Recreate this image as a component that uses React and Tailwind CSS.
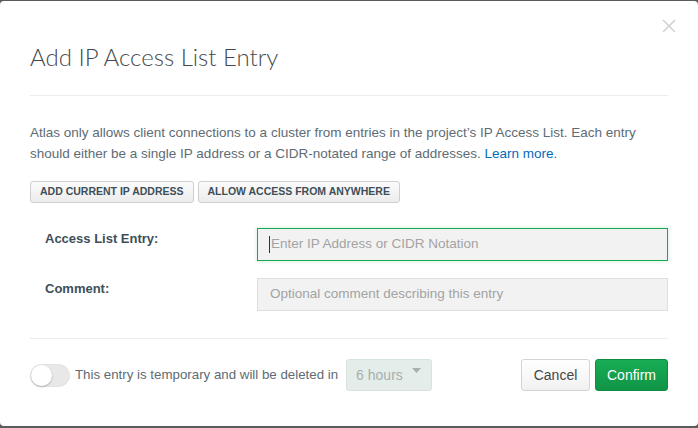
import React from 'react';

const sans = { fontFamily: '"Liberation Sans", Arial, sans-serif' };

const CloseIcon = () => (
  <svg width="14" height="14" viewBox="0 0 14 14" className="text-[#cfd4d3]">
    <path d="M1 1L13 13M13 1L1 13" stroke="currentColor" strokeWidth="1.6" fill="none" />
  </svg>
);

const App = () => {
  return (
    <div className="h-screen w-full bg-[#5b5b5b] pt-px" style={sans}>
      <div className="relative h-[425px] rounded-[4px] bg-white">
        <button className="absolute right-[22px] top-[18px]">
          <CloseIcon />
        </button>

        {/* Header */}
        <div className="px-[30px] pt-[40px]">
          <h2
            className="pb-[22px] text-[24px] font-light leading-[32px] text-[#464a4c]"
            style={{ fontFamily: 'Lato, "Liberation Sans", sans-serif' }}
          >
            Add IP Access List Entry
          </h2>
          <div className="h-px bg-[#e7eeec]" />
        </div>

        {/* Body */}
        <div className="px-[30px] pt-[26px]">
          <p className="text-[13.5px] leading-[21px] text-[#5d6c74]">
            Atlas only allows client connections to a cluster from entries in the project’s IP Access List. Each entry
            <br />
            should either be a single IP address or a CIDR-notated range of addresses.{' '}
            <a className="text-[#006cbc]">Learn more</a>.
          </p>

          <div className="mt-[17px] flex gap-1">
            <button className="h-[22px] rounded-[3px] border border-[#cfcfcf] bg-gradient-to-b from-[#fbfbfb] to-[#ececec] px-[9px] text-[10.5px] font-bold text-[#3d4f58]">
              ADD CURRENT IP ADDRESS
            </button>
            <button className="h-[22px] rounded-[3px] border border-[#cfcfcf] bg-gradient-to-b from-[#fbfbfb] to-[#ececec] px-[9px] text-[10.5px] font-bold text-[#3d4f58]">
              ALLOW ACCESS FROM ANYWHERE
            </button>
          </div>

          <div className="mt-[25px] flex flex-col gap-[17px] pl-[15px]">
            <div className="flex items-start">
              <label className="w-[212px] pt-[3px] text-[13px] font-bold leading-[16px] text-[#3d4f58]">
                Access List Entry:
              </label>
              <div className="flex h-[33px] flex-1 items-center bg-[#f2f2f2] px-[12px] shadow-[inset_0_0_0_1px_#13aa52,0_0_4px_1px_#dcf2e5]">
                <span className="mr-px h-[17px] w-px bg-[#333]" />
                <span className="text-[13.5px] text-[#a3a3a3]">Enter IP Address or CIDR Notation</span>
              </div>
            </div>
            <div className="flex items-start">
              <label className="w-[212px] pt-[3px] text-[13px] font-bold leading-[16px] text-[#3d4f58]">
                Comment:
              </label>
              <div className="flex h-[33px] flex-1 items-center border border-[#dedede] bg-[#f2f2f2] px-[12px]">
                <span className="text-[13.5px] text-[#a3a3a3]">Optional comment describing this entry</span>
              </div>
            </div>
          </div>

          <div className="mt-[27px] h-px bg-[#e7eeec]" />
        </div>

        {/* Footer */}
        <div className="flex items-center px-[30px] pt-[20px]">
          <div className="relative h-[23px] w-[40px] rounded-full border border-[#e2e2e2] bg-[#e8e8e8]">
            <div className="absolute left-0 top-0 h-[21px] w-[21px] rounded-full bg-white shadow-[0_1px_2px_rgba(0,0,0,0.25)]" />
          </div>
          <span className="ml-[5px] text-[13.3px] text-[#5d6c74]">This entry is temporary and will be deleted in</span>
          <div className="ml-[8px] flex h-[32px] w-[86px] items-center justify-between rounded-[3px] border border-[#d8e2df] bg-[#e5edeb] pl-[9px] pr-[10px]">
            <span className="text-[14px] text-[#a6b0ad]">6 hours</span>
            <svg width="9" height="6" viewBox="0 0 9 6" className="-mt-[8px]">
              <path d="M0 0H9L4.5 5Z" fill="#a6b0ad" />
            </svg>
          </div>
          <div className="ml-auto flex gap-[5px]">
            <button className="h-[32px] w-[69px] rounded-[3px] border border-[#d4d4d4] bg-gradient-to-b from-white to-[#f1f1f1] text-[14px] text-[#464646]">
              Cancel
            </button>
            <button className="h-[32px] w-[73px] rounded-[3px] border border-[#0f8a43] bg-gradient-to-b from-[#18ad55] to-[#109447] text-[14px] text-white">
              Confirm
            </button>
          </div>
        </div>
      </div>
    </div>
  );
};

export default App;
